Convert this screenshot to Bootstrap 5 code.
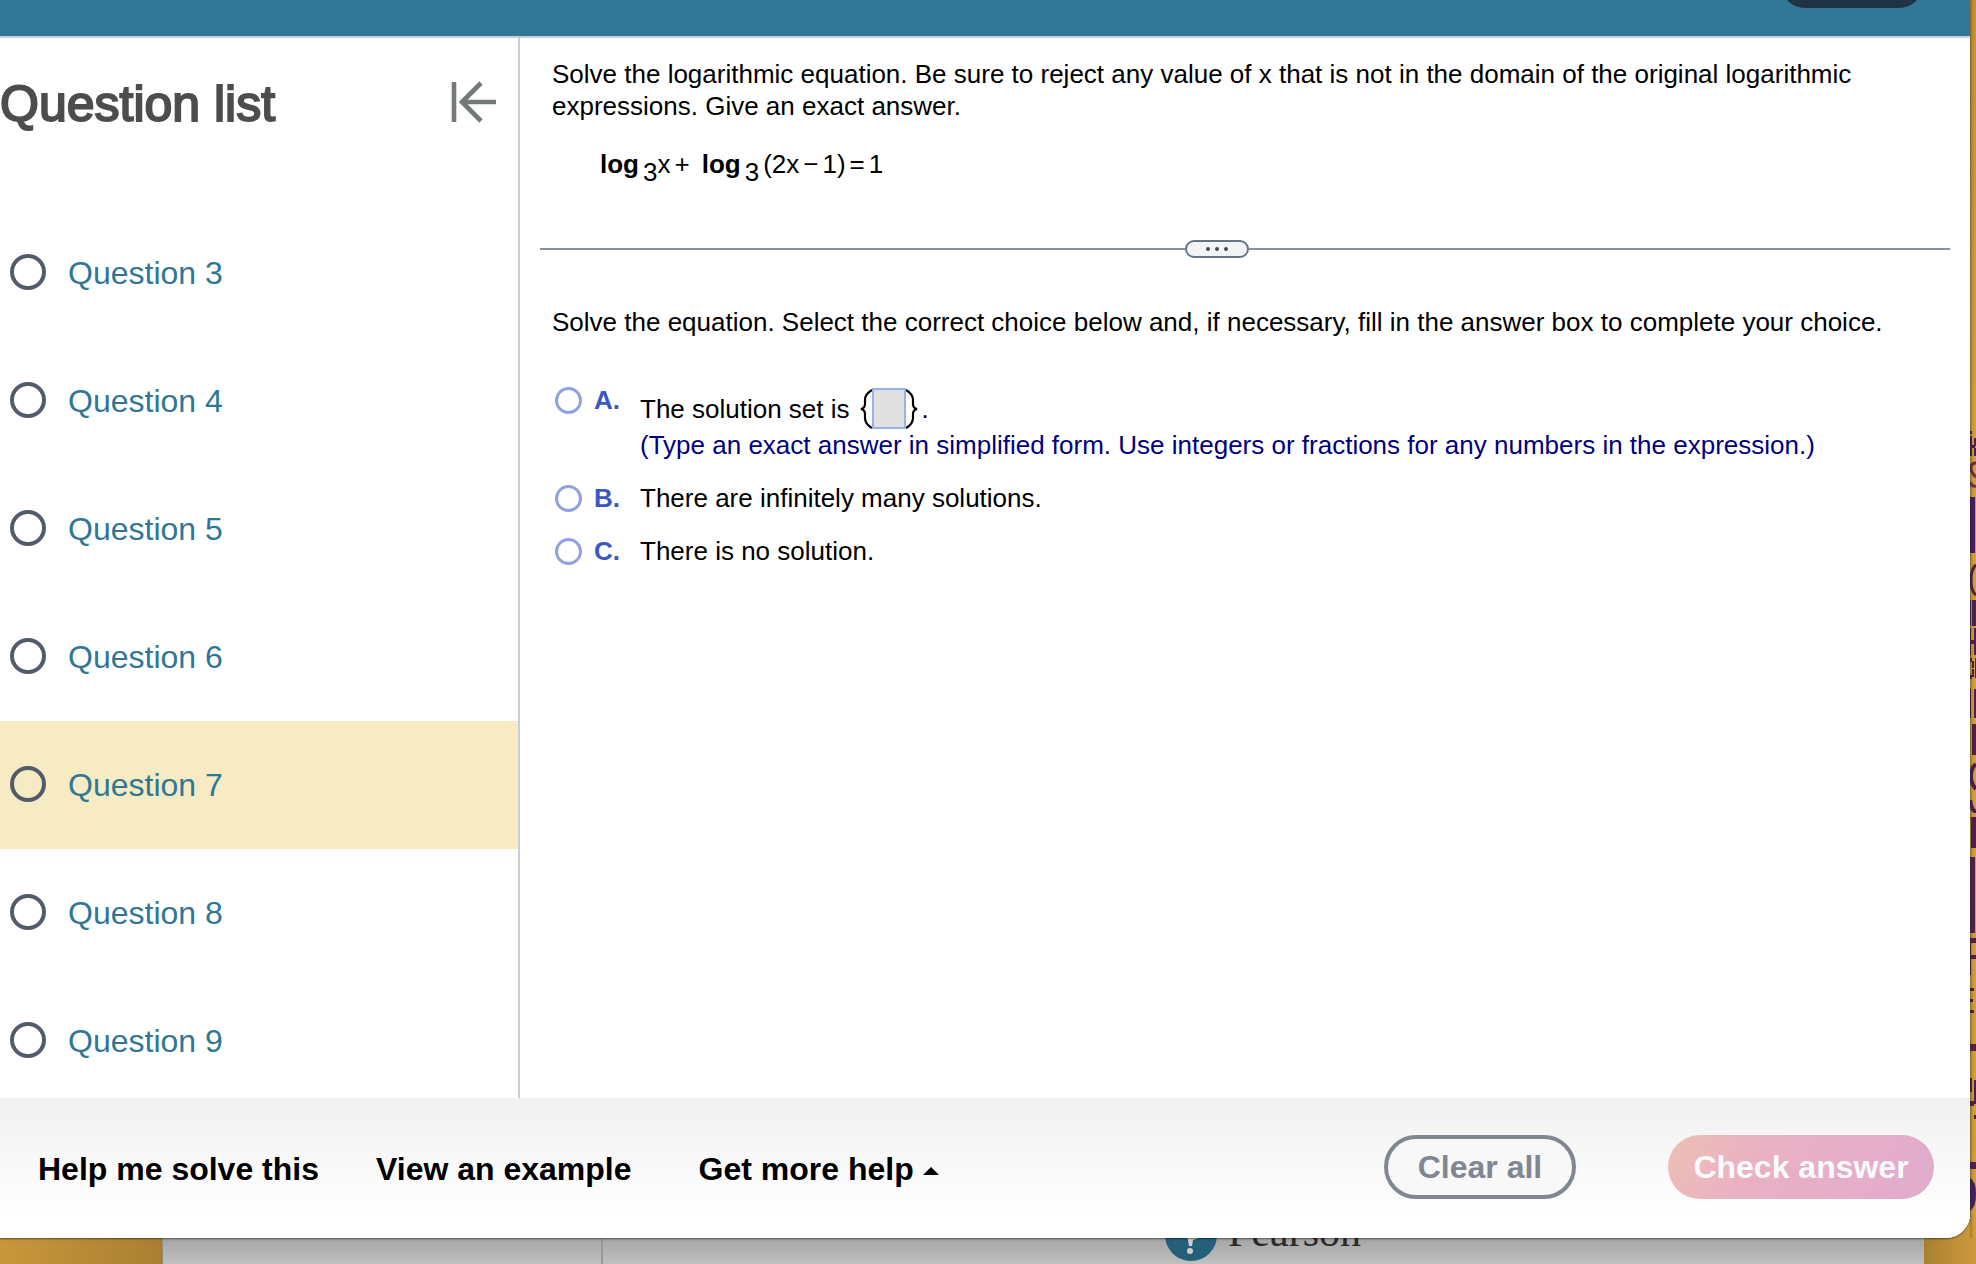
<!DOCTYPE html>
<html lang="en">
<head>
<meta charset="utf-8">
<meta name="viewport" content="width=device-width, initial-scale=1">
<title>Question 7</title>
<link href="https://cdn.jsdelivr.net/npm/bootstrap@5.3.0/dist/css/bootstrap.min.css" rel="stylesheet">
<style>
  body { font-family: "Liberation Sans", Arial, sans-serif; font-size: 26px; line-height: 32px; color: #000; background: linear-gradient(90deg, #c9973b 0, #a87f31 162px, #a87f31 1924px, #cf9a3d 1976px); }
  .quiz-window { background: #fff; border-bottom-right-radius: 24px; overflow: hidden; min-width: 0; }
  .window-wrap { box-shadow: 0 1px 2px rgba(0,0,0,.5); border-bottom-right-radius: 24px; min-width: 0; position: relative; z-index: 1; display: flex; }
  .can-shrink { min-height: 0; }
  .top-strip { height: 38px; background: #307896; border-bottom: 2px solid #c9cdda; padding-right: 47px; overflow: hidden; }
  .top-pill { width: 142px; height: 48px; margin-top: -40px; border-radius: 24px; background: #203344; }
  .question-nav { width: 520px; border-right: 2px solid #c9cdda; overflow: hidden; }
  .nav-head { height: 171px; padding: 38px 22px 0 0; }
  .nav-title { font-size: 50px; line-height: 56px; font-weight: 400; color: #4d4d4d; -webkit-text-stroke: 2px #4d4d4d; }
  .question-row { height: 128px; padding: 0 10px; gap: 22px; font-size: 32px; line-height: 36px; color: #2f7895; }
  .question-row.current { background: #f7ebc3; }
  .ring { width: 36px; height: 36px; margin-bottom: 2px; border: 4px solid #525b68; border-radius: 50%; }
  .work-area { padding: 20px 20px 0; }
  .equation { margin-top: 26px; padding-left: 48px; height: 32px; gap: 4px; }
  .equation .base3 { margin-top: 8px; }
  .equation .log-gap { margin-left: 8px; }
  .equation .no-gap { margin-left: -4px; }
  .split-bar { height: 18px; margin-top: 60px; }
  .split-line { height: 2px; background: #8791a2; }
  .split-tail { padding-left: 56px; }
  .split-grip { width: 64px; height: 18px; border: 2px solid #667587; border-radius: 9px; background: #f3f4f7; }
  .answers { margin-top: 48px; }
  .choices { margin-top: 46px; gap: 21px; }
  .choice-radio { appearance: none; width: 27px; height: 27px; margin: 3px 12px 0 3px; border: 3px solid #91a2e0; border-radius: 50%; background: #fff; flex: none; }
  .choice-radio:checked { background: #8295db; }
  .choice-key { width: 46px; font-weight: 700; color: #3a57c4; flex: none; }
  .choice-body { padding-top: 4px; }
  .set-line { height: 41px; }
  .brace-open { margin-left: 10px; }
  .set-input { width: 34px; height: 41px; border: 2px solid #9ab1e6; background: #e0e0e0; padding: 0; font-size: 22px; text-align: center; border-radius: 0; }
  .hint { color: #00007f; }
  .help-bar { height: 140px; background: linear-gradient(#f1f1f1, #fff 85%); padding: 0 36px 3px 38px; font-size: 32px; }
  .help-links { gap: 57px; padding-top: 5px; }
  .help-link { border: 0; background: none; padding: 0; font-weight: 700; line-height: 36px; color: #000; }
  .help-link.more { margin-left: 10px; gap: 9px; }
  .action-set { gap: 92px; }
  .pill-btn { height: 64px; border-radius: 32px; font-size: 32px; font-weight: 700; line-height: 36px; padding: 0; }
  .clear-btn { width: 192px; border: 4px solid #808692; color: #808692; background: #f8f8f9; }
  .check-btn { width: 266px; border: 0; color: #fafafd; background: linear-gradient(120deg, #edbfb4, #e9b1c4 35%, #e4adca 75%, #dfaccc); }
  .wallpaper { width: 6px; flex: none; overflow: hidden; background: linear-gradient(90deg, rgba(90,60,10,.35), transparent 4px), linear-gradient(#c29137, #cfa13e 35%, #cf9e3d); }
  .page-behind { height: 26px; margin: 0 52px 0 162px; background: linear-gradient(#a5a5a5, #c0c0c0); overflow: hidden; border-left: 1px solid #8c8c8c; }
  .behind-side { width: 440px; border-right: 2px solid #999; flex: none; }
  .behind-brand { margin: -30px 0 0 562px; height: 54px; gap: 11px; }
  .brand-name { font-family: "Liberation Serif", "Times New Roman", serif; font-size: 42px; line-height: 48px; color: #2d2a29; }
</style>
</head>
<body>
<div class="d-flex flex-column vh-100 overflow-hidden">
  <div class="d-flex flex-grow-1 can-shrink">
    <div class="window-wrap flex-grow-1">
    <div class="quiz-window d-flex flex-column flex-grow-1">
      <header class="top-strip d-flex justify-content-end flex-shrink-0"><span class="top-pill" aria-hidden="true"></span></header>
      <div class="d-flex flex-grow-1 can-shrink">
        <nav class="question-nav flex-shrink-0" aria-label="Question list">
          <div class="nav-head d-flex justify-content-between align-items-start">
            <h1 class="nav-title m-0">Question list</h1>
            <button class="btn p-0 border-0 lh-1 mt-1" type="button" aria-label="Collapse question list">
              <svg class="d-block" width="46" height="44" viewBox="0 0 46 44" fill="none" stroke="#737878" stroke-width="4.6"><path d="M4 2v40M46 22H13M31 3L12 22l19 19"/></svg>
            </button>
          </div>
          <a href="#q3" class="question-row d-flex align-items-center text-decoration-none"><span class="ring"></span>Question 3</a>
          <a href="#q4" class="question-row d-flex align-items-center text-decoration-none"><span class="ring"></span>Question 4</a>
          <a href="#q5" class="question-row d-flex align-items-center text-decoration-none"><span class="ring"></span>Question 5</a>
          <a href="#q6" class="question-row d-flex align-items-center text-decoration-none"><span class="ring"></span>Question 6</a>
          <a href="#q7" class="question-row current d-flex align-items-center text-decoration-none" aria-current="page"><span class="ring"></span>Question 7</a>
          <a href="#q8" class="question-row d-flex align-items-center text-decoration-none"><span class="ring"></span>Question 8</a>
          <a href="#q9" class="question-row d-flex align-items-center text-decoration-none"><span class="ring"></span>Question 9</a>
        </nav>
        <main class="work-area flex-grow-1">
          <section class="px-2 mx-1">
            <p class="m-0">Solve the logarithmic equation. Be sure to reject any value of x that is not in the domain of the original logarithmic expressions. Give an exact answer.</p>
            <div class="equation d-flex">
              <b>log</b><span class="base3">3</span><span class="no-gap">x</span><span>+</span><b class="log-gap">log</b><span class="base3">3</span><span>(2x</span><span>−</span><span>1)</span><span>=</span><span>1</span>
            </div>
          </section>
          <div class="split-bar d-flex align-items-center">
            <div class="split-line flex-grow-1"></div>
            <button class="split-grip d-flex align-items-center justify-content-center p-0 m-0" type="button" aria-label="Resize panes">
              <svg width="26" height="6" viewBox="0 0 26 6" fill="#444b55"><circle cx="4" cy="3" r="2"/><circle cx="13" cy="3" r="2"/><circle cx="22" cy="3" r="2"/></svg>
            </button>
            <div class="split-line split-tail flex-grow-1"></div>
          </div>
          <section class="answers px-2 mx-1">
            <p class="m-0">Solve the equation. Select the correct choice below and, if necessary, fill in the answer box to complete your choice.</p>
            <div class="choices d-flex flex-column">
              <div class="d-flex align-items-start">
                <input class="choice-radio" type="radio" name="choice" id="choiceA">
                <label class="choice-key" for="choiceA">A.</label>
                <div class="choice-body">
                  <div class="set-line d-flex align-items-center">
                    <label for="setValue">The solution set is</label>
                    <svg class="brace-open" width="12" height="40" viewBox="0 0 12 40" fill="none" stroke="#000" stroke-width="2.2"><path d="M12 1Q5 5 5 11V15Q5 19 1 20Q5 21 5 25V29Q5 35 12 39"/></svg>
                    <input class="set-input" id="setValue" type="text">
                    <svg width="12" height="40" viewBox="0 0 12 40" fill="none" stroke="#000" stroke-width="2.2"><path d="M0 1Q7 5 7 11V15Q7 19 11 20Q7 21 7 25V29Q7 35 0 39"/></svg>
                    <span class="ms-1">.</span>
                  </div>
                  <div class="hint">(Type an exact answer in simplified form. Use integers or fractions for any numbers in the expression.)</div>
                </div>
              </div>
              <div class="d-flex align-items-start">
                <input class="choice-radio" type="radio" name="choice" id="choiceB">
                <label class="choice-key" for="choiceB">B.</label>
                <label for="choiceB">There are infinitely many solutions.</label>
              </div>
              <div class="d-flex align-items-start">
                <input class="choice-radio" type="radio" name="choice" id="choiceC">
                <label class="choice-key" for="choiceC">C.</label>
                <label for="choiceC">There is no solution.</label>
              </div>
            </div>
          </section>
        </main>
      </div>
      <footer class="help-bar d-flex align-items-center justify-content-between flex-shrink-0">
        <div class="help-links d-flex">
          <button class="help-link" type="button">Help me solve this</button>
          <button class="help-link" type="button">View an example</button>
          <button class="help-link more d-flex align-items-center" type="button">Get more help
            <svg width="16" height="8" viewBox="0 0 16 8" class="mt-1"><path d="M0 8L8 0l8 8z"/></svg>
          </button>
        </div>
        <div class="action-set d-flex">
          <button class="btn pill-btn clear-btn" type="button">Clear all</button>
          <button class="btn pill-btn check-btn" type="button">Check answer</button>
        </div>
      </footer>
    </div>
    </div>
    <div class="wallpaper" aria-hidden="true">
      <svg class="d-block" width="6" height="1238" viewBox="0 0 6 1238" fill="#4b2145">
        <path d="M0 431h2v3H0zM0 436h2v20H0zM4 438h2v8H4zM4 448h2v8H4zM2 445h3v3H2z"/>
        <path d="M6 463Q1 463 1 468T6 477M0 482Q2 487 6 486" fill="none" stroke="#6b2c43" stroke-width="3"/>
        <path d="M0 497h5v56H0z" fill="#41215b"/>
        <path d="M6 565Q1 569 1 580T6 595" fill="none" stroke="#4b2145" stroke-width="3"/>
        <path d="M2 600h4v26H2zM0 600h1v26H0zM0 640h6v4H0zM4 628h2v27H4zM0 628h1v27H0z"/>
        <path d="M0 658h2v4H0zM0 675h2v4H0zM2 661h2v7H2zM2 669h2v8H2zM5 658h1v20H5z"/>
        <path d="M0 689h1v29H0zM4 689h2v29H4zM2 724h4v31H2z"/>
        <path d="M6 764Q1 768 1 776T6 789M0 800Q2 812 6 811" fill="none" stroke="#452050" stroke-width="4"/>
        <path d="M1 817h5v31H1zM0 857h5v76H0zM0 938h6v5H0zM0 955h6v4H0zM0 938h1v37H0zM0 988h4v3H0zM0 999h3v3H0zM0 1010h4v3H0z"/>
        <path d="M0 1044h6v7H0zM0 1078h2v14H0zM0 1101h4v5H0zM4 1080h2v24H4zM4 1115h2v4H4zM0 1162h6v7H0z"/>
        <path d="M0 1178Q6 1181 6 1194T0 1211z" fill="#442153"/>
      </svg>
    </div>
  </div>
  <div class="page-behind d-flex align-items-stretch flex-shrink-0" aria-hidden="true">
    <div class="behind-side"></div>
    <div class="behind-brand d-flex align-items-start">
      <svg class="flex-shrink-0" width="52" height="54" viewBox="0 0 52 54"><ellipse cx="26" cy="27" rx="26" ry="26" fill="#255f78"/><path d="M17 10Q36 6 37 20Q37 30 28 32L27 38H24L22 27Q31 27 30 19Q28 13 17 16z" fill="#c8d0d4"/><circle cx="25" cy="43" r="3" fill="#c8d0d4"/></svg>
      <span class="brand-name">Pearson</span>
    </div>
  </div>
</div>
<script src="https://cdn.jsdelivr.net/npm/bootstrap@5.3.0/dist/js/bootstrap.bundle.min.js"></script>
</body>
</html>
